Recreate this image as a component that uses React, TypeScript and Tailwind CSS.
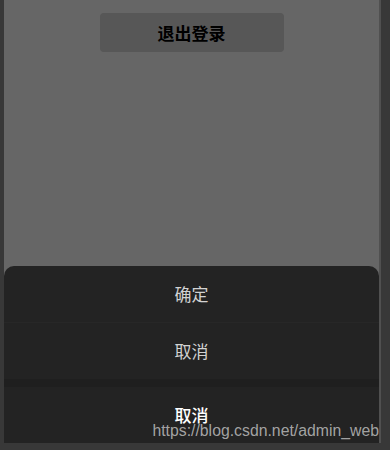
const font = "font-['Noto_Sans_CJK_SC','Noto_Sans',sans-serif]";

function SheetRow({ label, strong }: { label: string; strong?: boolean }) {
  return (
    <div
      className={`flex h-[56px] items-center justify-center text-[17px] ${
        strong ? 'font-medium text-white' : 'text-[#d2d2d2]'
      }`}
    >
      {label}
    </div>
  );
}

export default function App() {
  return (
    <div className={`h-[450px] w-[390px] bg-[#383838] pb-[7px] pl-[4px] pr-[11px] ${font}`}>
      <div className="relative flex h-full flex-col bg-[#666666] shadow-[2px_0_0_#505050]">
        <div className="mt-[13px] flex justify-center">
          <button className="h-[39px] w-[184px] rounded-[4px] bg-[#575757] text-[17px] font-bold text-black">
            退出登录
          </button>
        </div>

        <div className="mt-auto overflow-hidden rounded-t-[10px] bg-[#232323]">
          <SheetRow label="确定" />
          <div className="h-px bg-[#272727]" />
          <SheetRow label="取消" />
          <div className="h-[8px] bg-[#1f1f1f]" />
          <SheetRow label="取消" strong />
        </div>

        <div className="absolute bottom-[4px] right-0 font-['Liberation_Sans',Arial,sans-serif] text-[15.8px] leading-none text-[#b4b4b4]/90">
          https://blog.csdn.net/admin_web
        </div>
      </div>
    </div>
  );
}
